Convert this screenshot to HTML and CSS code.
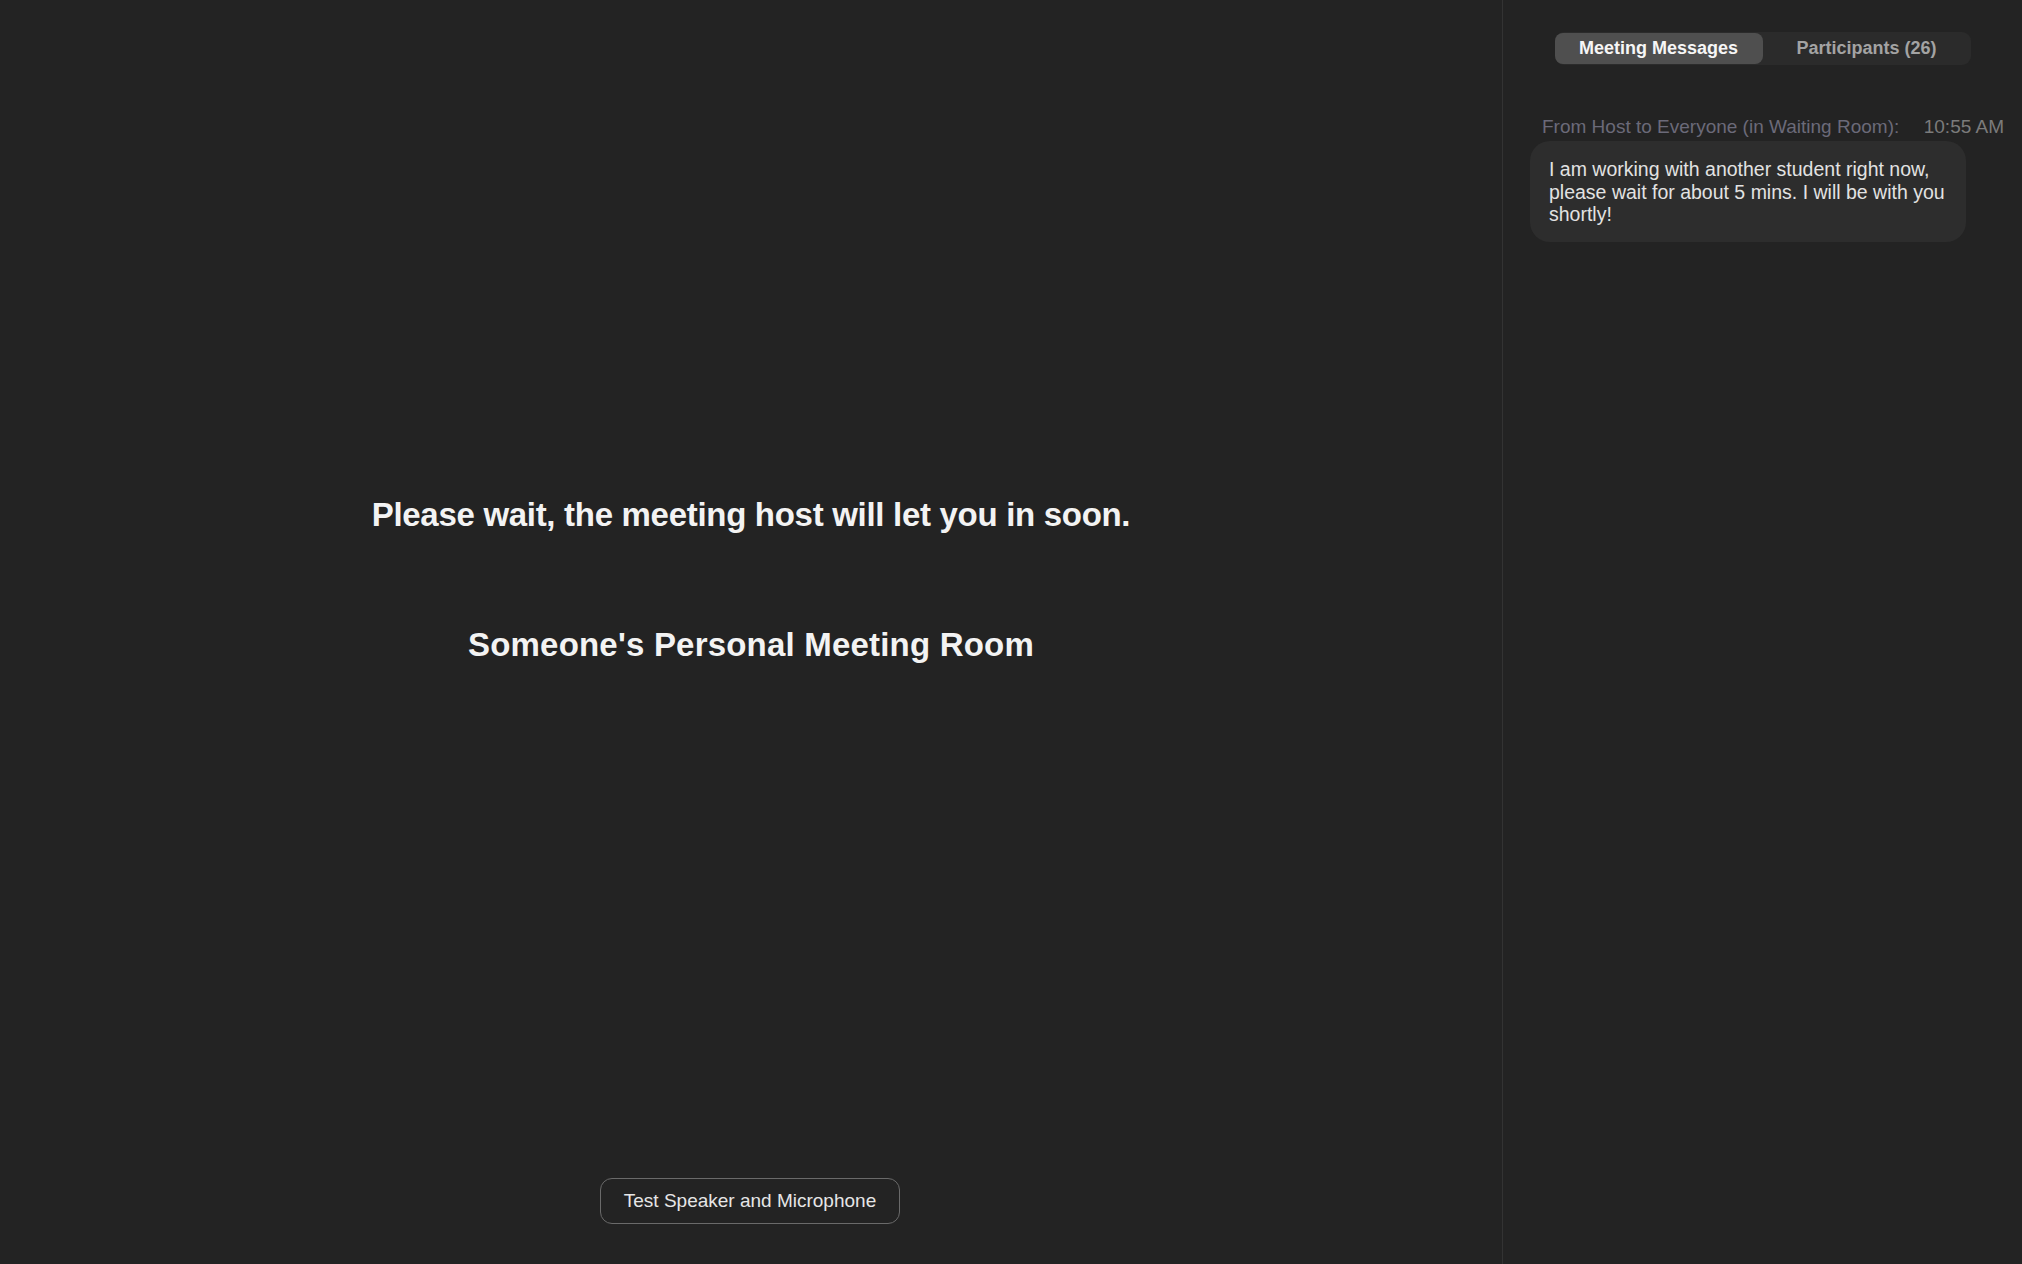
FILE: index.html
```html
<!DOCTYPE html>
<html lang="en">
<head>
<meta charset="utf-8">
<title>Waiting Room</title>
<link rel="stylesheet" href="styles.css">
</head>
<body>
  <main class="stage">
    <div class="notice">
      <h1 class="notice-title">Please wait, the meeting host will let you in soon.</h1>
      <h2 class="notice-room">Someone's Personal Meeting Room</h2>
    </div>
    <button class="test-btn" type="button">Test Speaker and Microphone</button>
  </main>
  <aside class="side">
    <div class="tabs">
      <div class="tab tab-active">Meeting Messages</div>
      <div class="tab">Participants (26)</div>
    </div>
    <div class="msg-head">
      <span class="msg-from">From Host to Everyone (in Waiting Room):</span>
      <span class="msg-time">10:55 AM</span>
    </div>
    <div class="bubble">I am working with another student right now, please wait for about 5 mins. I will be with you shortly!</div>
  </aside>
</body>
</html>
```
FILE: styles.css
```css
html, body {
  margin: 0;
  padding: 0;
}
body {
  width: 2022px;
  height: 1264px;
  background: #232323;
  display: flex;
  font-family: "Liberation Sans", Arial, sans-serif;
  color: #e8e8e8;
  overflow: hidden;
}
.stage {
  flex: 0 0 1502px;
  display: flex;
  flex-direction: column;
  align-items: center;
}
.notice {
  padding-top: 495px;
  display: flex;
  flex-direction: column;
  align-items: center;
  gap: 90px;
}
.notice-title,
.notice-room {
  margin: 0;
  font-size: 33px;
  line-height: 40px;
  font-weight: 700;
  letter-spacing: -0.3px;
  color: #f3f3f3;
}
.notice-room {
  letter-spacing: 0.2px;
}
.test-btn {
  margin-top: auto;
  margin-bottom: 40px;
  margin-right: 2px;
  width: 300px;
  height: 46px;
  background: #232323;
  border: 1.5px solid #6a6a6a;
  border-radius: 12px;
  color: #e6e6e6;
  font-family: "Liberation Sans", Arial, sans-serif;
  font-size: 19px;
  padding: 0;
}
.side {
  flex: 1 1 auto;
  border-left: 1px solid #333333;
  display: flex;
  flex-direction: column;
}
.tabs {
  margin: 32px auto 0;
  width: 416px;
  height: 33px;
  box-sizing: border-box;
  padding: 1px 0;
  background: #2b2b2b;
  border-radius: 9px;
  display: flex;
}
.tab {
  flex: 1 1 0;
  display: flex;
  align-items: center;
  justify-content: center;
  font-size: 18px;
  font-weight: 700;
  color: #a3a3a3;
  border-radius: 8px;
}
.tab-active {
  background: #4f4f4f;
  color: #f6f6f6;
}
.msg-head {
  margin-top: 51px;
  padding: 0 18px 0 39px;
  display: flex;
  justify-content: space-between;
  font-size: 19px;
  line-height: 22px;
}
.msg-from {
  color: #6b6a79;
}
.msg-time {
  color: #7b7b7b;
}
.bubble {
  margin: 3px 0 0 27px;
  width: 436px;
  box-sizing: border-box;
  padding: 17px 18px 16px 19px;
  background: #2d2d2d;
  border-radius: 20px;
  font-size: 19.5px;
  line-height: 22.5px;
  color: #e2e2e2;
}
```
